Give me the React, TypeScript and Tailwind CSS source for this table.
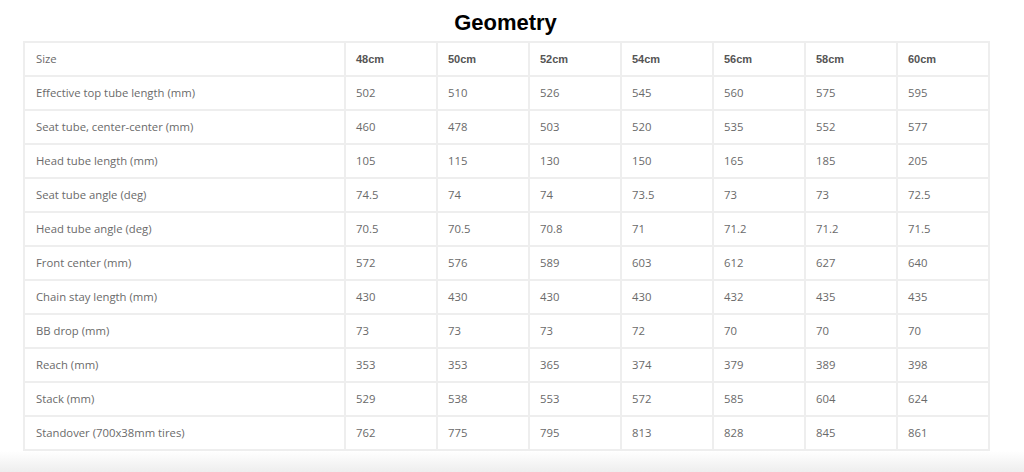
import React from "react";

const sizes = ["48cm", "50cm", "52cm", "54cm", "56cm", "58cm", "60cm"];
const rows: [string, string[]][] = [
  ["Effective top tube length (mm)", ["502", "510", "526", "545", "560", "575", "595"]],
  ["Seat tube, center-center (mm)", ["460", "478", "503", "520", "535", "552", "577"]],
  ["Head tube length (mm)", ["105", "115", "130", "150", "165", "185", "205"]],
  ["Seat tube angle (deg)", ["74.5", "74", "74", "73.5", "73", "73", "72.5"]],
  ["Head tube angle (deg)", ["70.5", "70.5", "70.8", "71", "71.2", "71.2", "71.5"]],
  ["Front center (mm)", ["572", "576", "589", "603", "612", "627", "640"]],
  ["Chain stay length (mm)", ["430", "430", "430", "430", "432", "435", "435"]],
  ["BB drop (mm)", ["73", "73", "73", "72", "70", "70", "70"]],
  ["Reach (mm)", ["353", "353", "365", "374", "379", "389", "398"]],
  ["Stack (mm)", ["529", "538", "553", "572", "585", "604", "624"]],
  ["Standover (700x38mm tires)", ["762", "775", "795", "813", "828", "845", "861"]],
];

export default function App() {
  return (
    <div className="w-[1024px] h-[472px] bg-white flex flex-col overflow-hidden">
      <div className="ml-[23px] w-[965px] flex flex-col">
        <h1
          className="text-center text-[22px] font-bold text-black leading-[26px] pt-[10px] pb-[5px]"
          style={{ fontFamily: '"Liberation Sans", Arial, sans-serif' }}
        >
          Geometry
        </h1>
        <table className="w-[965px] border-collapse table-fixed">
          <colgroup>
            <col className="w-[321px]" />
            {sizes.map((s) => (
              <col key={s} className="w-[92px]" />
            ))}
          </colgroup>
          <tbody>
            <tr className="h-[34px]">
              <td
                className="border-2 border-[#eeeeee] pl-[11px] pr-[10px] text-[11.3px] text-[#6a6a6a] align-middle"
                style={{ fontFamily: '"Open Sans", sans-serif' }}
              >
                Size
              </td>
              {sizes.map((s) => (
                <td
                  key={s}
                  className="border-2 border-[#eeeeee] px-[10px] text-[11px] font-bold text-[#555555] align-middle"
                  style={{ fontFamily: '"Liberation Sans", Arial, sans-serif' }}
                >
                  {s}
                </td>
              ))}
            </tr>
            {rows.map(([label, vals]) => (
              <tr key={label} className="h-[34px]">
                <td
                  className="border-2 border-[#eeeeee] pl-[11px] pr-[10px] text-[11.3px] text-[#6a6a6a] align-middle"
                  style={{ fontFamily: '"Open Sans", sans-serif' }}
                >
                  {label}
                </td>
                {vals.map((v, i) => (
                  <td
                    key={i}
                    className="border-2 border-[#eeeeee] px-[10px] text-[11.3px] text-[#6a6a6a] align-middle"
                    style={{ fontFamily: '"Open Sans", sans-serif' }}
                  >
                    {v}
                  </td>
                ))}
              </tr>
            ))}
          </tbody>
        </table>
      </div>
      <div className="flex-1 bg-gradient-to-b from-white to-[#eeeeee]" />
    </div>
  );
}
